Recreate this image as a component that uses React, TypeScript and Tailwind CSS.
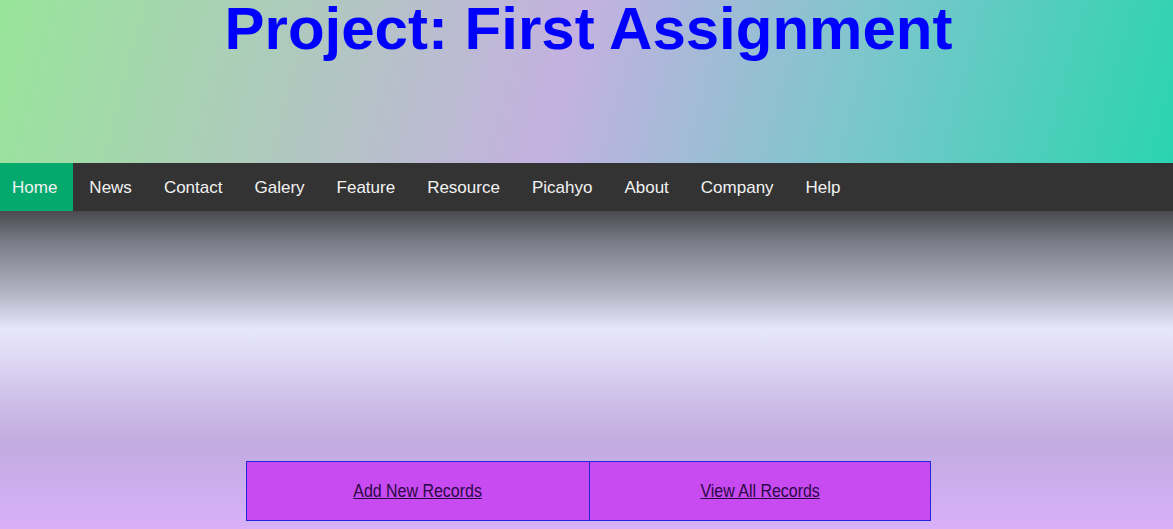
import React from "react";

const items = ["Home", "News", "Contact", "Galery", "Feature", "Resource", "Picahyo", "About", "Company", "Help"];

export default function App() {
  return (
    <div className="w-[1173px] h-[529px] overflow-hidden flex flex-col" style={{ fontFamily: '"Liberation Sans", Arial, sans-serif' }}>
      <header className="h-[163px] bg-[linear-gradient(105deg,#98e59a_0%,#b3c4c4_30%,#c4b1e0_48%,#7ec6cc_72%,#2ad4b0_100%)]">
        <h1 className="text-center text-[60px] leading-[58px] font-bold text-[#0000ff] pl-[4px]">Project: First Assignment</h1>
      </header>
      <nav className="h-[48px] bg-[#333333] flex">
        {items.map((it, i) => (
          <a
            key={it}
            className={
              "text-[17px] leading-[20px] pt-[15px] pb-[13px] text-[#f2f2f2] " +
              (i === 0 ? "bg-[#04aa6d] pl-[12px] pr-[16px]" : "px-[16px]")
            }
          >
            {it}
          </a>
        ))}
      </nav>
      <main className="flex-1 flex flex-col bg-[linear-gradient(to_bottom,#4a4a4f_0%,#7c7c88_10%,#b0b0c0_25%,#e6e6fa_37%,#dcd6f2_48%,#cbbbe6_62%,#c2ace0_72%,#cbadec_85%,#d9b0f9_100%)]">
        <div className="mt-[250px] ml-[246px] w-[685px] h-[60px] flex border border-[#2424d8] bg-[#c84bf1]">
          <div className="w-[343px] flex items-center justify-center border-r border-[#2424d8]">
            <a className="inline-block underline text-[19px] text-[#2a0845] scale-x-[0.84]">Add New Records</a>
          </div>
          <div className="flex-1 flex items-center justify-center">
            <a className="inline-block underline text-[19px] text-[#2a0845] scale-x-[0.84]">View All Records</a>
          </div>
        </div>
      </main>
    </div>
  );
}
